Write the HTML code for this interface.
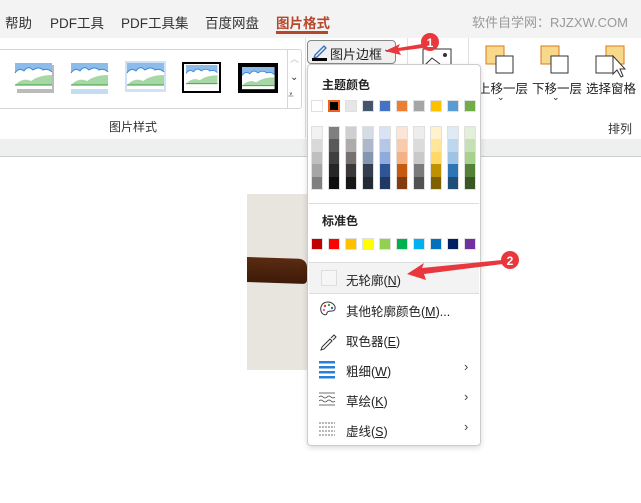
<!DOCTYPE html>
<html><head><meta charset="utf-8"><style>
*{margin:0;padding:0;box-sizing:border-box}
body{width:641px;height:503px;overflow:hidden;background:#fff;font-family:"Liberation Sans","Noto Sans CJK SC",sans-serif;font-size:13px;color:#222;position:relative}
.a{position:absolute}
.tab{position:absolute;top:12px;font-size:13.5px;color:#333}
.sw{position:absolute;width:12px;height:12px;border:1px solid #e0e0e0}
.col{position:absolute;width:12px;border:1px solid #e0e0e0}
.col div{height:12.4px}
.it{position:absolute;left:346px;font-size:12.5px;color:#222}
.sep{position:absolute;left:309px;width:170px;height:1px;background:#ddd}
.thumb{position:absolute;top:62px;width:40px;height:32px}
</style></head><body>
<div class="a" style="left:0;top:0;width:641px;height:38px;background:#f3f3f3"></div>
<div class="tab" style="left:5px">帮助</div>
<div class="tab" style="left:50px">PDF工具</div>
<div class="tab" style="left:121px">PDF工具集</div>
<div class="tab" style="left:205px">百度网盘</div>
<div class="tab" style="left:276px;color:#b7472a;font-weight:bold">图片格式</div>
<div class="a" style="left:276px;top:31px;width:52px;height:3px;background:#b7472a"></div>
<div class="a" style="left:472px;top:12px;font-size:13px;color:#999">软件自学网：RJZXW.COM</div>
<div class="a" style="left:0;top:38px;width:641px;height:101px;background:#fff"></div>
<div class="a" style="left:0;top:139px;width:641px;height:18px;background:#eef0f0;border-bottom:1px solid #ccc"></div>
<!-- gallery -->
<div class="a" style="left:-2px;top:49px;width:304px;height:60px;border:1px solid #d6d6d6;border-radius:3px"></div>
<div class="a" style="left:287px;top:49px;width:16px;height:60px;border-left:1px solid #d6d6d6"></div>
<div class="a" style="left:290px;top:52px;font-size:9px;color:#bbb">︿</div>
<div class="a" style="left:290px;top:72px;font-size:10px;color:#333">⌄</div>
<div class="a" style="left:288px;top:90px;font-size:10px;color:#333">⩡</div>
<svg class="a" style="left:0;top:55px" width="290" height="50">
<defs><g id="pic"><rect x="0" y="0" width="37" height="26" fill="#8dbbea"/><path d="M0 10 q4-6 9-2 q4-6 9-1 q6-4 10 0 q5-2 9 2 V26 H0Z" fill="#fff"/><path d="M0 10 q4-6 9-2 q4-6 9-1 q6-4 10 0 q5-2 9 2" stroke="#3a86d6" fill="none"/><path d="M0 22 q8-8 16-4 q8-6 21-6 V22Z" fill="#a6d8a6"/><path d="M0 22 H37" stroke="#3c9a3c"/></g></defs>
<rect x="17" y="10" width="37" height="28" fill="#bbb"/><use href="#pic" x="15" y="8"/>
<rect x="71" y="31" width="37" height="8" fill="#c4dcf4"/><use href="#pic" x="71" y="8"/>
<rect x="125" y="6" width="41" height="31" fill="#cfe2f6"/><use href="#pic" x="127" y="8"/>
<rect x="183" y="8" width="37" height="29" fill="#fff" stroke="#000" stroke-width="2"/><use href="#pic" transform="translate(186,10) scale(0.85,0.85)"/>
<rect x="238" y="8" width="40" height="30" fill="#000"/><use href="#pic" transform="translate(242,12) scale(0.88,0.85)"/>
</svg>
<div class="a" style="left:109px;top:118px;font-size:12px;color:#333">图片样式</div>
<div class="a" style="left:305px;top:38px;width:1px;height:100px;background:#e0e0e0"></div>
<!-- border button -->
<div class="a" style="left:307px;top:40px;width:89px;height:24px;border:1px solid #888;border-radius:4px;background:#f0f0f0"></div>
<svg class="a" style="left:311px;top:43px" width="18" height="18"><path d="M4 12 L13 3 L15 5 L6 14 L3 15Z" fill="none" stroke="#2a6fc9" stroke-width="1.3"/><rect x="1" y="15" width="15" height="3" fill="#000"/></svg>
<div class="a" style="left:330px;top:44px;font-size:13px">图片边框</div>
<div class="a" style="left:383px;top:44px;font-size:10px">⌄</div>
<div class="a" style="left:407px;top:38px;width:1px;height:100px;background:#e0e0e0"></div>
<svg class="a" style="left:422px;top:48px" width="32" height="22"><rect x="1" y="1" width="28" height="20" fill="#fff" stroke="#333"/><path d="M2 18 L10 10 L18 16" stroke="#333" fill="none"/><circle cx="23" cy="7" r="2" fill="#333"/><rect x="12" y="18" width="18" height="3" fill="#2a7fd6"/></svg>
<div class="a" style="left:468px;top:38px;width:1px;height:100px;background:#e0e0e0"></div>
<!-- arrange -->
<svg class="a" style="left:484px;top:44px" width="160" height="36">
<rect x="2" y="2" width="18" height="18" fill="#f8d98c" stroke="#d97a1a"/><rect x="12" y="12" width="17" height="17" fill="#fff" stroke="#333"/>
<rect x="57" y="2" width="18" height="18" fill="#f8d98c" stroke="#d97a1a"/><rect x="67" y="12" width="17" height="17" fill="#fff" stroke="#333"/>
<rect x="122" y="2" width="18" height="18" fill="#f8d98c" stroke="#d97a1a"/><rect x="112" y="12" width="17" height="17" fill="#fff" stroke="#333"/>
<path d="M129 12 L129 30 L133 26 L137 33 L139 32 L136 25 L141 25Z" fill="#fff" stroke="#333"/>
</svg>
<div class="a" style="left:478px;top:78px;font-size:12.5px">上移一层</div>
<div class="a" style="left:532px;top:78px;font-size:12.5px">下移一层</div>
<div class="a" style="left:586px;top:78px;font-size:12.5px">选择窗格</div>
<div class="a" style="left:497px;top:92px;font-size:9px">⌄</div>
<div class="a" style="left:552px;top:92px;font-size:9px">⌄</div>
<div class="a" style="left:608px;top:120px;font-size:12px;color:#333">排列</div>
<!-- image -->
<div class="a" style="left:247px;top:194px;width:60px;height:176px;background:#e8e4de"></div>
<div class="a" style="left:247px;top:258px;width:60px;height:25px;background:linear-gradient(#5a2c12,#3e1a08);border-radius:0 8px 4px 0;transform:skewY(2deg)"></div>
<!-- menu -->
<div class="a" style="left:307px;top:64px;width:174px;height:382px;background:#fff;border:1px solid #ccc;border-radius:4px;box-shadow:0 2px 6px rgba(0,0,0,.15)"></div>
<div class="a" style="left:322px;top:76px;font-size:12px;font-weight:bold">主题颜色</div>
<div id="theme"></div>
<div class="sep" style="top:203px"></div>
<div class="a" style="left:322px;top:212px;font-size:12px;font-weight:bold">标准色</div>
<div class="sep" style="top:262px"></div>
<div class="a" style="left:309px;top:263px;width:170px;height:30px;background:#f3f3f3"></div>
<div class="a" style="left:321px;top:270px;width:16px;height:16px;border:1px solid #ddd;background:#f6f6f6"></div>
<div class="it" style="top:270px">无轮廓(<u>N</u>)</div>
<div class="sep" style="top:293px"></div>
<div class="it" style="top:301px">其他轮廓颜色(<u>M</u>)...</div>
<div class="it" style="top:331px">取色器(<u>E</u>)</div>
<div class="it" style="top:361px">粗细(<u>W</u>)</div>
<div class="it" style="top:391px">草绘(<u>K</u>)</div>
<div class="it" style="top:421px">虚线(<u>S</u>)</div>
<div class="a" style="left:464px;top:359px;color:#444">›</div>
<div class="a" style="left:464px;top:389px;color:#444">›</div>
<div class="a" style="left:464px;top:419px;color:#444">›</div>
<svg class="a" style="left:319px;top:300px" width="20" height="140">
<path d="M9 2 C3 2 1 7 2 11 C3 15 8 16 8 13 C8 11 11 11 13 11 C17 11 17 6 14 4 C12 2 10 2 9 2Z" fill="none" stroke="#333"/><circle cx="6" cy="6" r="1.2" fill="#e33"/><circle cx="10" cy="5" r="1.2" fill="#3a3"/><circle cx="13" cy="8" r="1.2" fill="#36c"/><circle cx="5" cy="10" r="1.2" fill="#c6c"/>
<path d="M3 47 L11 39 L13 41 L5 49 L2 50Z M12 38 L15 35 L17 37 L14 40" fill="none" stroke="#333"/>
<rect x="0" y="61" width="16" height="2.5" fill="#2a7fd6"/><rect x="0" y="66" width="16" height="2.5" fill="#2a7fd6"/><rect x="0" y="71" width="16" height="2.5" fill="#2a7fd6"/><rect x="0" y="76" width="16" height="2.5" fill="#2a7fd6"/>
<path d="M0 93 H16 M0 97 q2-2 4 0 q2 2 4 0 q2-2 4 0 q2 2 4 0 M0 101 q2-2 4 0 q2 2 4 0 q2-2 4 0 q2 2 4 0 M0 105 H16" stroke="#444" fill="none" stroke-width=".8"/>
<path d="M0 123 H16 M0 127 H16 M0 131 H16 M0 135 H16" stroke="#444" stroke-dasharray="2 1" stroke-width=".8"/>
</svg>
<!-- arrows -->
<svg class="a" style="left:0;top:0" width="641" height="503">
<path d="M422 44 L398 48 L400 44 L385 51 L401 55 L399 51 L423 48Z" fill="#e8383d"/>
<circle cx="430" cy="42" r="9" fill="#e8383d"/><text x="430" y="47" font-size="12" font-weight="bold" fill="#fff" text-anchor="middle" font-family="Liberation Sans">1</text>
<path d="M502 260 L422 268 L424 263 L407 274 L426 280 L424 274 L503 264Z" fill="#e8383d"/>
<circle cx="510" cy="260" r="9" fill="#e8383d"/><text x="510" y="265" font-size="12" font-weight="bold" fill="#fff" text-anchor="middle" font-family="Liberation Sans">2</text>
</svg>
<div class="sw" style="left:311px;top:100px;background:#fff"></div>
<div class="sw" style="left:328px;top:100px;background:#000;border:2px solid #f0601a;outline:1px solid #fff"></div>
<div class="sw" style="left:345px;top:100px;background:#e7e6e6"></div>
<div class="sw" style="left:362px;top:100px;background:#44546a"></div>
<div class="sw" style="left:379px;top:100px;background:#4472c4"></div>
<div class="sw" style="left:396px;top:100px;background:#ed7d31"></div>
<div class="sw" style="left:413px;top:100px;background:#a5a5a5"></div>
<div class="sw" style="left:430px;top:100px;background:#ffc000"></div>
<div class="sw" style="left:447px;top:100px;background:#5b9bd5"></div>
<div class="sw" style="left:464px;top:100px;background:#70ad47"></div>
<div class="col" style="left:311px;top:126px"><div style="background:#f2f2f2"></div><div style="background:#d9d9d9"></div><div style="background:#bfbfbf"></div><div style="background:#a6a6a6"></div><div style="background:#808080"></div></div>
<div class="col" style="left:328px;top:126px"><div style="background:#7f7f7f"></div><div style="background:#595959"></div><div style="background:#3f3f3f"></div><div style="background:#262626"></div><div style="background:#0d0d0d"></div></div>
<div class="col" style="left:345px;top:126px"><div style="background:#d0cece"></div><div style="background:#aeabab"></div><div style="background:#757171"></div><div style="background:#3a3838"></div><div style="background:#171616"></div></div>
<div class="col" style="left:362px;top:126px"><div style="background:#d6dce5"></div><div style="background:#adb9ca"></div><div style="background:#8497b0"></div><div style="background:#333f50"></div><div style="background:#222a35"></div></div>
<div class="col" style="left:379px;top:126px"><div style="background:#dae3f3"></div><div style="background:#b4c7e7"></div><div style="background:#8faadc"></div><div style="background:#2f5597"></div><div style="background:#1f3864"></div></div>
<div class="col" style="left:396px;top:126px"><div style="background:#fbe5d6"></div><div style="background:#f8cbad"></div><div style="background:#f4b183"></div><div style="background:#c55a11"></div><div style="background:#843c0c"></div></div>
<div class="col" style="left:413px;top:126px"><div style="background:#ededed"></div><div style="background:#dbdbdb"></div><div style="background:#c9c9c9"></div><div style="background:#7b7b7b"></div><div style="background:#525252"></div></div>
<div class="col" style="left:430px;top:126px"><div style="background:#fff2cc"></div><div style="background:#ffe699"></div><div style="background:#ffd966"></div><div style="background:#bf9000"></div><div style="background:#7f6000"></div></div>
<div class="col" style="left:447px;top:126px"><div style="background:#deebf7"></div><div style="background:#bdd7ee"></div><div style="background:#9dc3e6"></div><div style="background:#2e75b6"></div><div style="background:#1f4e79"></div></div>
<div class="col" style="left:464px;top:126px"><div style="background:#e2f0d9"></div><div style="background:#c5e0b4"></div><div style="background:#a9d18e"></div><div style="background:#548235"></div><div style="background:#385723"></div></div>
<div class="sw" style="left:311px;top:238px;background:#c00000"></div>
<div class="sw" style="left:328px;top:238px;background:#ff0000"></div>
<div class="sw" style="left:345px;top:238px;background:#ffc000"></div>
<div class="sw" style="left:362px;top:238px;background:#ffff00"></div>
<div class="sw" style="left:379px;top:238px;background:#92d050"></div>
<div class="sw" style="left:396px;top:238px;background:#00b050"></div>
<div class="sw" style="left:413px;top:238px;background:#00b0f0"></div>
<div class="sw" style="left:430px;top:238px;background:#0070c0"></div>
<div class="sw" style="left:447px;top:238px;background:#002060"></div>
<div class="sw" style="left:464px;top:238px;background:#7030a0"></div>
</body></html>
